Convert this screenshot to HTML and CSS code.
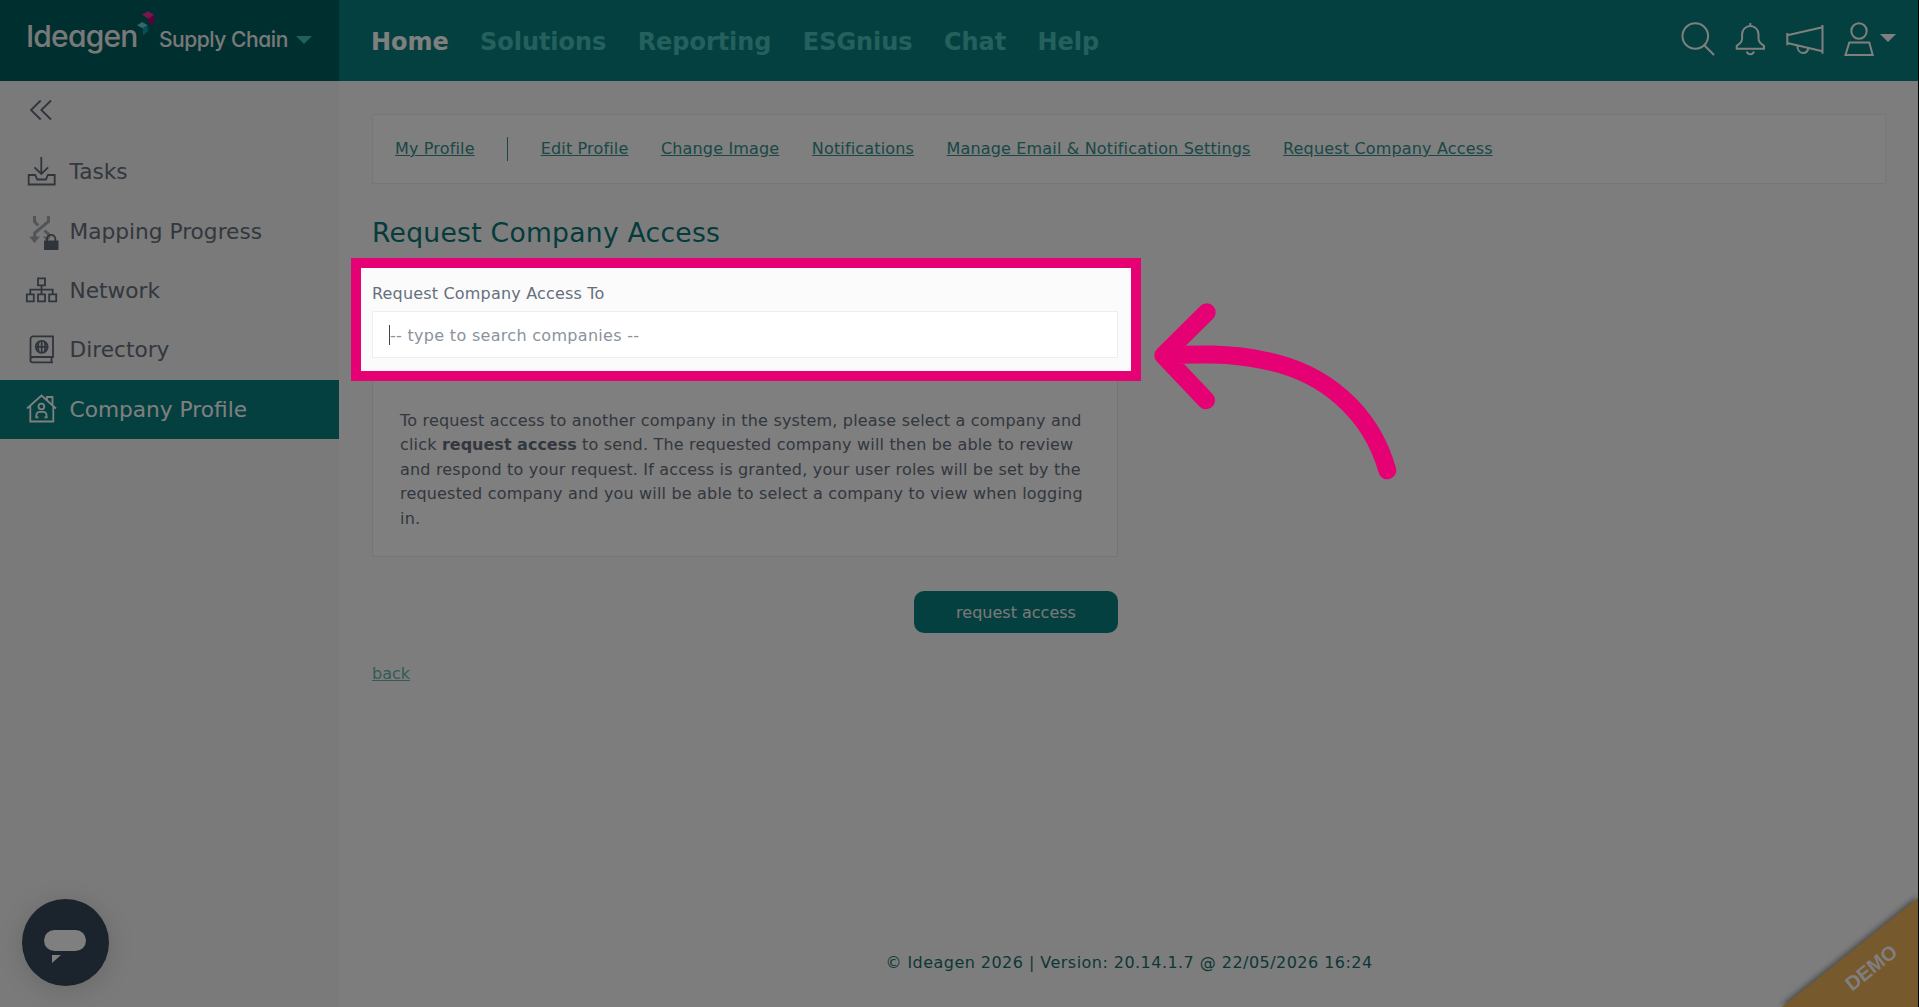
FILE: index.html
```
<!DOCTYPE html>
<html lang="en">
<head>
    <meta charset="UTF-8">
    <meta name="viewport" content="width=device-width, initial-scale=1.0">
    <title>Request Company Access</title>
    <link rel="stylesheet" href="styles.css">
</head>
<body>
    <header class="header">
        <div class="logo">
            <span class="logo-name">Ideagen</span>
            <svg class="logo-mark" width="20" height="26" viewBox="0 0 20 26">
                <path fill="#ee2a9c" d="M6 4.5 12 1.2l6.3 3.5-5.6 4.2z"/>
                <path fill="#b80078" d="M12.7 8.6 18.3 4.7v7.2L13.5 15z"/>
                <path fill="#6ccfd3" d="M1 15.2 6.3 12l5.4 3.2-5 3z"/>
                <path fill="#00a5ac" d="M6.7 18.2l5-3v6.2l-4.6 4z"/>
            </svg>
            <span class="logo-product">Supply Chain</span>
            <svg class="logo-caret" width="16" height="8" viewBox="0 0 16 8"><path fill="#3fbfb9" d="M0 0h16L8 8z"/></svg>
        </div>
        <nav class="nav">
            <a class="active">Home</a>
            <a>Solutions</a>
            <a>Reporting</a>
            <a>ESGnius</a>
            <a>Chat</a>
            <a>Help</a>
        </nav>
        <div class="tools">
            <svg width="34" height="34" viewBox="0 0 34 34"><circle cx="14.3" cy="14" r="12.8"/><path d="M23.3 23.3 33 33"/></svg>
            <svg width="31" height="34" viewBox="0 0 31 34"><path d="M15.3 1v2.5M1.7 26.7V24l3.8-3.3c1.3-1.2 1.6-2.5 1.6-4.5v-4a8.2 8.2 0 0 1 16.4 0v4c0 2 .3 3.3 1.6 4.5l3.9 3.3v2.7zM11.8 29.5c.8 3.6 6.3 3.6 7.1 0"/></svg>
            <svg width="38" height="34" viewBox="0 0 38 34"><path d="M1.3 11v12.3M36.5 3v28.7M1.3 13.3l35.2-8M1.3 21l35.2 8.3M11.3 24c.2 4 2.5 7 5.7 7 2.8 0 4.7-1.5 5.3-4.5"/></svg>
            <div class="user">
                <svg width="30" height="34" viewBox="0 0 30 34"><circle cx="15" cy="9" r="7.7"/><path d="M5.3 20.5h20L28.7 33H1.5z"/></svg>
                <svg class="user-caret" width="16" height="8" viewBox="0 0 16 8"><path d="M0 0h16L8 8z"/></svg>
            </div>
        </div>
    </header>

    <div class="page">
        <aside class="sidebar">
            <div class="collapse">
                <svg width="32" height="32" viewBox="0 0 32 32"><path d="M14.7 6.5 5 16l9.7 9.5M25 6.5 15.3 16l9.7 9.5"/></svg>
            </div>
            <a class="item">
                <svg width="32" height="32" viewBox="0 0 32 32"><path d="M15.3 1v17M8.5 11.3l6.8 6.7 6.8-6.7M2.7 19h6.5l2 4.5h8.7l2-4.5h6.8v9.5h-26z"/></svg>
                <span>Tasks</span>
            </a>
            <a class="item">
                <svg width="32" height="32" viewBox="0 0 32 32">
                    <g class="muted">
                        <path d="M8.5 1v5.500l3.7 4M22.5 1v5.500L8.7 18v5M18.5 15.500l4 3.700v3"/>
                        <path class="fill" d="M3 21.500h11l-5.500 6.500zM17 21.500h8l-4 5z"/>
                    </g>
                    <path class="lock" d="M18 25.500h14.500v9.500H18z"/>
                    <path d="M21 26v-2a4.200 4.200 0 0 1 8.400 0v2"/>
                </svg>
                <span>Mapping Progress</span>
            </a>
            <a class="item">
                <svg width="32" height="32" viewBox="0 0 32 32"><path d="M12 4.300h7v7h-7zM15.500 11.300v9M4.300 20.300v-4.700h22.400v4.700M.800 20.300h7v7h-7zM12 20.300h7v7h-7zM23.200 20.300h7v7h-7z"/></svg>
                <span>Network</span>
            </a>
            <a class="item">
                <svg width="32" height="32" viewBox="0 0 32 32"><path d="M4.500 26V5a2.700 2.700 0 0 1 2.700-2.700H27V23H7a2.700 2.700 0 0 0 0 5.400h20M25.500 23v5.400"/><circle cx="15.700" cy="12.800" r="6"/><path d="M9.700 12.800h12M15.700 6.800v12M12.900 7.500c-1.300 3.500-1.300 7 0 10.500M18.500 7.500c1.300 3.500 1.300 7 0 10.500"/></svg>
                <span>Directory</span>
            </a>
            <a class="item active">
                <svg width="32" height="32" viewBox="0 0 32 32"><path d="M1 15.500 15.500 2.500 30 15.500M4.300 13.500v15h23v-15M21 7V4h5.500v7.800"/><circle cx="15.400" cy="13.500" r="2.900"/><path d="M12.500 24.300h-2.300c0-3.500 1-5.500 3-5.500h4.500c2 0 3 2 3 5.500h-2.300"/></svg>
                <span>Company Profile</span>
            </a>
        </aside>

        <main class="content">
            <div class="links">
                <a>My Profile</a>
                <span class="divider"></span>
                <a>Edit Profile</a>
                <a>Change Image</a>
                <a>Notifications</a>
                <a>Manage Email &amp; Notification Settings</a>
                <a>Request Company Access</a>
            </div>
            <h1>Request Company Access</h1>
            <form class="form">
                <label for="company">Request Company Access To</label>
                <div class="field">
                    <span class="caret"></span>
                    <input type="text" id="company" placeholder="-- type to search companies --">
                </div>
                <div class="info">
                    <p>To request access to another company in the system, please select a company and click <b>request access</b> to send. The requested company will then be able to review and respond to your request. If access is granted, your user roles will be set by the requested company and you will be able to select a company to view when logging in.</p>
                </div>
                <button type="button">request access</button>
            </form>
            <a class="back">back</a>
            <footer class="footer">© Ideagen 2026 | Version: 20.14.1.7 @ 22/05/2026 16:24</footer>
        </main>
    </div>

    <div class="chat">
        <svg width="87" height="87" viewBox="0 0 87 87"><rect x="22" y="31" width="42" height="21" rx="10.5"/><path d="M30 56h9l-9 8z"/></svg>
    </div>

    <svg class="ribbon" width="140" height="112" viewBox="0 0 140 112">
        <path d="M4 112 140 3v109z"/>
        <text x="93" y="79.500" transform="rotate(-38.5 93 72.500)">DEMO</text>
    </svg>

    <!-- dims everything except the highlighted field -->
    <div class="spotlight"></div>
    <svg class="arrow" width="260" height="180" viewBox="0 0 260 180">
        <path d="M66.7 12.3 23.3 55.3 66 100.3M23.3 55.3C55 54 90 53 122 60c62 11 109 52 125.3 110.3"/>
    </svg>
</body>
</html>
```
FILE: styles.css
```
* {
    margin: 0;
    padding: 0;
    box-sizing: border-box;
}

body {
    height: 100vh;
    display: flex;
    flex-direction: column;
    overflow: hidden;
    border-right: 1px solid #000;
    background: #fbfbfb;
    color: #666f7d;
    font-family: Verdana, "DejaVu Sans", sans-serif;
    font-size: 16px;
}

svg {
    display: block;
    flex-shrink: 0;
    overflow: visible;
}

/* header */
.header {
    display: flex;
    height: 81px;
    background: #08807e;
}

.logo {
    display: flex;
    align-items: flex-start;
    width: 339px;
    padding: 10px 0 0 26px;
    background: #005e5e;
    color: #f2f2f2;
    font-family: Inter, sans-serif;
    font-feature-settings: "cv11";
    font-weight: 500;
    line-height: 30px;
}

.logo-name {
    width: 110px;
    margin-top: 11px;
    font-size: 30px;
    letter-spacing: -0.8px;
}

.logo-product {
    width: 132px;
    margin: 15px 0 0 3px;
    font-size: 21px;
    letter-spacing: -0.45px;
    white-space: nowrap;
}

.logo-caret {
    margin: 26px 0 0 5px;
}

.nav {
    display: flex;
    align-items: center;
    gap: 31.4px;
    padding: 2px 0 0 32px;
    font-size: 24px;
    font-weight: bold;
    letter-spacing: -0.05px;
}

.nav a {
    color: #48c0bc;
}

.nav .active {
    color: #fff;
}

.tools {
    display: flex;
    gap: 20px;
    margin-left: auto;
    padding: 22px 22px 0 0;
}

.tools svg {
    fill: none;
    stroke: #fff;
    stroke-width: 2;
}

.user {
    display: flex;
    gap: 6px;
}

.tools .user-caret {
    margin-top: 12px;
    fill: #fff;
    stroke: none;
}

/* sidebar */
.page {
    display: flex;
    flex: 1;
}

.sidebar {
    width: 339px;
    background: #f4f4f4;
    font-size: 21.7px;
}

.sidebar svg {
    fill: none;
    stroke: #606a79;
    stroke-width: 1.8;
}

.collapse {
    display: flex;
    align-items: center;
    height: 61px;
    padding: 0 0 3px 26px;
}

.item {
    display: flex;
    align-items: center;
    gap: 11.5px;
    height: 59.4px;
    padding-left: 26px;
}

.item.active {
    background: #08807e;
    color: #fff;
}

.item.active svg {
    stroke: #fff;
}

.item .muted {
    stroke: #a4a8ae;
    stroke-width: 3;
}

.item .fill {
    fill: #a4a8ae;
    stroke: none;
}

.item .lock {
    fill: #606a79;
    stroke: none;
}

/* content */
.content {
    display: flex;
    flex: 1;
    flex-direction: column;
    align-items: flex-start;
    padding: 33px 32px 0 33px;
}

.links {
    display: flex;
    align-items: center;
    align-self: stretch;
    gap: 32.5px;
    height: 70px;
    padding: 0 0 1px 22px;
    border: 1px solid #eee;
    background: #fefefe;
    letter-spacing: 0.16px;
}

.links a {
    color: #35908d;
    text-decoration: underline;
}

.divider {
    width: 1px;
    height: 24px;
    background: #35908d;
}

h1 {
    margin-top: 33px;
    color: #087876;
    font-size: 26.6px;
    font-weight: normal;
    line-height: 32px;
    letter-spacing: 0.26px;
}

.form {
    display: flex;
    flex-direction: column;
    width: 746px;
    margin-top: 35px;
}

label {
    line-height: 20px;
    letter-spacing: 0.18px;
}

.field {
    display: flex;
    align-items: center;
    height: 47px;
    margin-top: 7px;
    padding: 1px 0 0 16px;
    border: 1px solid #eee;
    background: #fff;
}

.caret {
    width: 1px;
    height: 20px;
    background: #3d4755;
}

input {
    flex: 1;
    border: none;
    outline: none;
    background: transparent;
    font: inherit;
    letter-spacing: 0.3px;
}

input::placeholder {
    color: #8b929d;
}

.info {
    height: 181px;
    margin-top: 18px;
    padding: 32px 27px 0;
    border: 1px solid #eaeaea;
    background: #fefefe;
    line-height: 24.4px;
    letter-spacing: 0.18px;
}

.info b {
    letter-spacing: 0;
}

button {
    align-self: flex-end;
    width: 204px;
    height: 42px;
    margin-top: 34px;
    border: none;
    border-radius: 10px;
    background: #08807e;
    color: #f2f2f2;
    font: inherit;
}

.back {
    margin-top: 31px;
    color: #6ab5b1;
    line-height: 20px;
    text-decoration: underline;
}

.footer {
    align-self: center;
    margin: auto 0 34px;
    color: #1a6f6d;
    line-height: 20px;
    letter-spacing: 0.46px;
}

/* floating things */
.chat {
    position: fixed;
    left: 22px;
    bottom: 21px;
    border-radius: 50%;
    background: #364658;
    box-shadow: 0 4px 26px rgba(0, 0, 0, 0.15);
}

.chat svg {
    fill: #fff;
}

.ribbon {
    position: fixed;
    right: 1px;
    bottom: 0;
    fill: #ecb45c;
    filter: drop-shadow(-1px -1px 3px rgba(0, 0, 0, 0.5));
}

.ribbon text {
    fill: #fff;
    font: bold 20px "Liberation Sans", sans-serif;
    text-anchor: middle;
}

.spotlight {
    position: fixed;
    top: 258px;
    left: 351px;
    width: 790px;
    height: 123px;
    border: 10px solid #e50074;
    box-shadow: 0 0 0 2000px rgba(0, 0, 0, 0.5);
}

.arrow {
    position: fixed;
    top: 300px;
    left: 1140px;
    fill: none;
    stroke: #e50074;
    stroke-width: 18;
    stroke-linecap: round;
    stroke-linejoin: round;
}
```
